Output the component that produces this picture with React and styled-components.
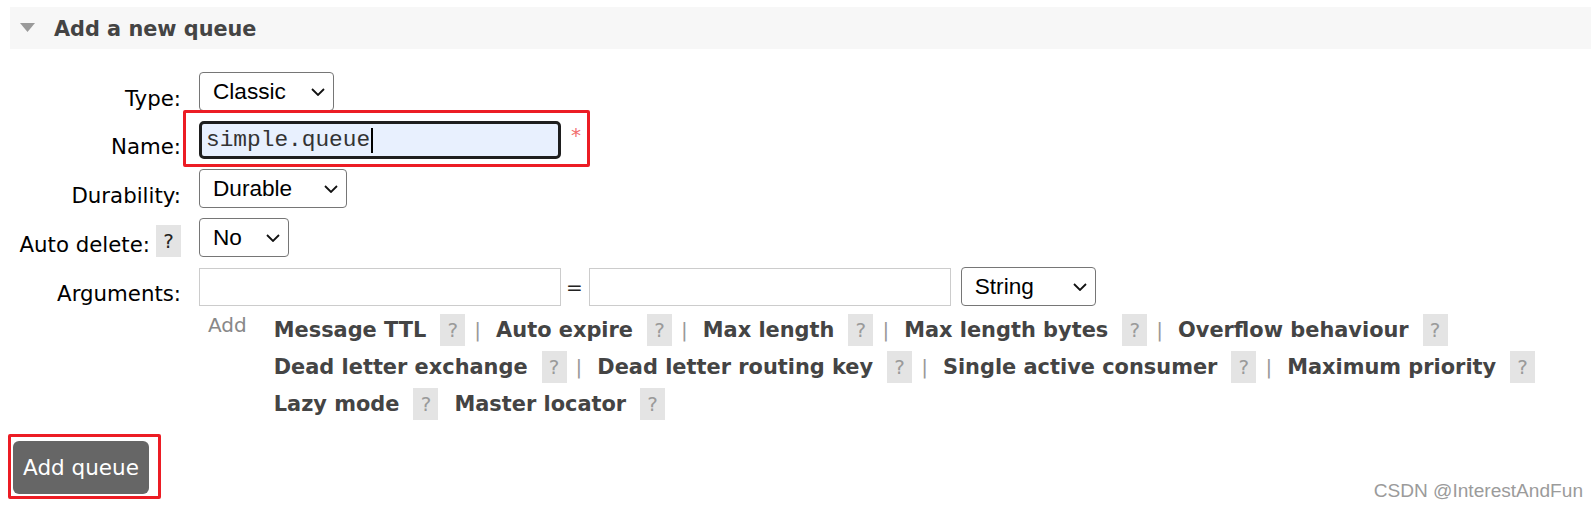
import React from 'react';
import styled, { createGlobalStyle } from 'styled-components';

const GlobalStyle = createGlobalStyle`
  html, body {
    margin: 0;
    padding: 0;
    background: #ffffff;
    overflow: hidden;
  }
  body {
    font-family: "DejaVu Sans", Verdana, sans-serif;
    color: #000;
  }
`;

const Page = styled.div`
  position: relative;
  min-height: 509px;
  padding-top: 7px;
  box-sizing: border-box;
`;

/* Section header */
const SectionHeader = styled.div`
  display: flex;
  align-items: center;
  height: 42px;
  margin-left: 10px;
  padding-left: 10px;
  background: #f7f7f7;
`;

const Toggle = styled.svg`
  width: 15px;
  height: 9px;
  margin-right: 19px;
  margin-top: -1px;
`;

const SectionTitle = styled.h2`
  margin: 0;
  padding-top: 1px;
  font-family: "DejaVu Sans", Verdana, sans-serif;
  font-size: 20.8px;
  font-weight: bold;
  color: #444;
`;

/* Form */
const Form = styled.div`
  margin-top: 23px;
`;

const FormRow = styled.div`
  display: flex;
  align-items: flex-end;
  margin-bottom: ${p => (p.$last ? '0' : '10px')};
`;

const Label = styled.label`
  display: flex;
  align-items: flex-end;
  justify-content: flex-end;
  width: 181px;
  margin-right: 18px;
  flex-shrink: 0;
  font-size: 21.3px;
  line-height: 25px;
  color: #000;
  white-space: nowrap;
`;

const Help = styled.span`
  display: inline-flex;
  align-items: center;
  justify-content: center;
  width: 25px;
  height: 32px;
  margin-left: ${p => p.$ml || 0}px;
  background: #e4e4e4;
  color: ${p => (p.$dark ? '#222' : '#9a9a9a')};
  font-family: "DejaVu Sans", Verdana, sans-serif;
  font-size: 20px;
  font-weight: normal;
  flex-shrink: 0;
`;

const SelectWrap = styled.div`
  position: relative;
  width: ${p => p.$w}px;
  height: 39px;
`;

const Select = styled.select`
  appearance: none;
  -webkit-appearance: none;
  width: 100%;
  height: 100%;
  margin: 0;
  padding: 0 30px 0 13px;
  box-sizing: border-box;
  border: 1px solid #767676;
  border-radius: 4px;
  background: #fff;
  color: #000;
  font-family: "Liberation Sans", Arial, sans-serif;
  font-size: 22.6px;
  outline: none;
`;

const Chevron = styled.svg`
  position: absolute;
  right: 9px;
  top: 50%;
  width: 14px;
  height: 8px;
  margin-top: -4px;
  pointer-events: none;
`;

const Dropdown = ({ width, value, options }) => (
  <SelectWrap $w={width}>
    <Select defaultValue={value}>
      {options.map(o => (
        <option key={o}>{o}</option>
      ))}
    </Select>
    <Chevron viewBox="0 0 14 8">
      <path d="M1 1l6 6 6-6" fill="none" stroke="#111" strokeWidth="1.8" />
    </Chevron>
  </SelectWrap>
);

const Annotated = styled.div`
  position: relative;
  display: inline-flex;
  align-items: flex-start;
`;

const RedFrame = styled.span`
  position: absolute;
  top: ${p => p.$t}px;
  left: ${p => p.$l}px;
  right: ${p => p.$r}px;
  bottom: ${p => p.$b}px;
  border: 3px solid #ec1c24;
  border-radius: 2px;
  pointer-events: none;
`;

const FocusedInput = styled.div`
  display: flex;
  align-items: center;
  width: 362px;
  height: 38px;
  box-sizing: border-box;
  padding-left: 4px;
  border: 3px solid #1e1e1e;
  border-radius: 5px;
  background: #e8f0fe;
  font-family: "Liberation Mono", "Courier New", monospace;
  font-size: 22.8px;
  color: #333;
`;

const Caret = styled.span`
  display: inline-block;
  width: 2px;
  height: 25px;
  margin-left: 1px;
  background: #000;
`;

const Required = styled.span`
  margin-left: 10px;
  margin-top: 4px;
  font-size: 20px;
  line-height: 20px;
  color: #f26d6d;
`;

const TextInput = styled.input`
  width: 362px;
  height: 38px;
  margin: 0;
  box-sizing: border-box;
  border: 1px solid #cccccc;
  background: #fff;
  font-family: "DejaVu Sans", Verdana, sans-serif;
  font-size: 18px;
  outline: none;
`;

const Equals = styled.span`
  margin: 0 6px 0 5px;
  align-self: center;
  font-size: 20px;
  color: #222;
`;

const ArgFields = styled.div`
  display: flex;
  align-items: center;
`;

const TypeSlot = styled.div`
  margin-left: 10px;
`;

/* Argument shortcuts */
const Extras = styled.div`
  display: flex;
  align-items: flex-start;
  margin-top: 5px;
  padding-left: 208px;
`;

const AddLink = styled.span`
  margin-top: 2px;
  margin-right: 27px;
  font-size: 20px;
  line-height: 24px;
  color: #888;
`;

const Shortcuts = styled.div`
  display: flex;
  flex-direction: column;
`;

const ShortcutRow = styled.div`
  display: flex;
  align-items: center;
  height: 37px;
  white-space: nowrap;
`;

const ShortcutName = styled.span`
  margin-left: ${p => (p.$gap ? 16 : 0)}px;
  font-size: 20.9px;
  line-height: 32px;
  font-weight: bold;
  color: #444;
`;

const Sep = styled.span`
  margin: 0 15px 0 9px;
  font-size: 20px;
  color: #999;
`;

const rows = [
  ['Message TTL', 'Auto expire', 'Max length', 'Max length bytes', 'Overflow behaviour'],
  ['Dead letter exchange', 'Dead letter routing key', 'Single active consumer', 'Maximum priority'],
];

const classicOnly = ['Lazy mode', 'Master locator'];

/* Submit */
const Actions = styled.div`
  margin-top: 19px;
  margin-left: 13px;
`;

const SubmitButton = styled.button`
  width: 136px;
  height: 53px;
  border: none;
  border-radius: 6px;
  background: #666666;
  color: #fff;
  font-family: "DejaVu Sans", Verdana, sans-serif;
  font-size: 21.5px;
  cursor: pointer;
`;

const Watermark = styled.div`
  position: absolute;
  right: 8px;
  bottom: 7px;
  font-family: "Liberation Sans", Arial, sans-serif;
  font-size: 19.1px;
  color: #9b9b9b;
`;

export default function App() {
  return (
    <Page>
      <GlobalStyle />
      <SectionHeader>
        <Toggle viewBox="0 0 15 9">
          <path d="M0 0h15L7.5 9z" fill="#9a9a9a" />
        </Toggle>
        <SectionTitle>Add a new queue</SectionTitle>
      </SectionHeader>

      <Form>
        <FormRow>
          <Label>Type:</Label>
          <Dropdown width={135} value="Classic" options={['Classic', 'Quorum', 'Stream']} />
        </FormRow>

        <FormRow>
          <Label>Name:</Label>
          <Annotated>
            <FocusedInput>
              simple.queue
              <Caret />
            </FocusedInput>
            <Required>*</Required>
            <RedFrame $t={-11} $l={-16} $r={-9} $b={-8} />
          </Annotated>
        </FormRow>

        <FormRow>
          <Label>Durability:</Label>
          <Dropdown width={148} value="Durable" options={['Durable', 'Transient']} />
        </FormRow>

        <FormRow>
          <Label>
            Auto delete:
            <Help $dark $ml={6}>?</Help>
          </Label>
          <Dropdown width={90} value="No" options={['No', 'Yes']} />
        </FormRow>

        <FormRow $last>
          <Label>Arguments:</Label>
          <ArgFields>
            <TextInput />
            <Equals>=</Equals>
            <TextInput />
            <TypeSlot>
              <Dropdown width={135} value="String" options={['String', 'Number', 'Boolean', 'List']} />
            </TypeSlot>
          </ArgFields>
        </FormRow>

        <Extras>
          <AddLink>Add</AddLink>
          <Shortcuts>
            {rows.map((row, i) => (
              <ShortcutRow key={i}>
                {row.map((name, j) => (
                  <React.Fragment key={name}>
                    <ShortcutName>{name}</ShortcutName>
                    <Help $ml={14}>?</Help>
                    {j < row.length - 1 && <Sep>|</Sep>}
                  </React.Fragment>
                ))}
              </ShortcutRow>
            ))}
            <ShortcutRow>
              {classicOnly.map((name, j) => (
                <React.Fragment key={name}>
                  <ShortcutName $gap={j > 0}>{name}</ShortcutName>
                  <Help $ml={14}>?</Help>
                </React.Fragment>
              ))}
            </ShortcutRow>
          </Shortcuts>
        </Extras>
      </Form>

      <Actions>
        <Annotated>
          <SubmitButton>Add queue</SubmitButton>
          <RedFrame $t={-7} $l={-5} $r={-12} $b={-5} />
        </Annotated>
      </Actions>

      <Watermark>CSDN @InterestAndFun</Watermark>
    </Page>
  );
}
